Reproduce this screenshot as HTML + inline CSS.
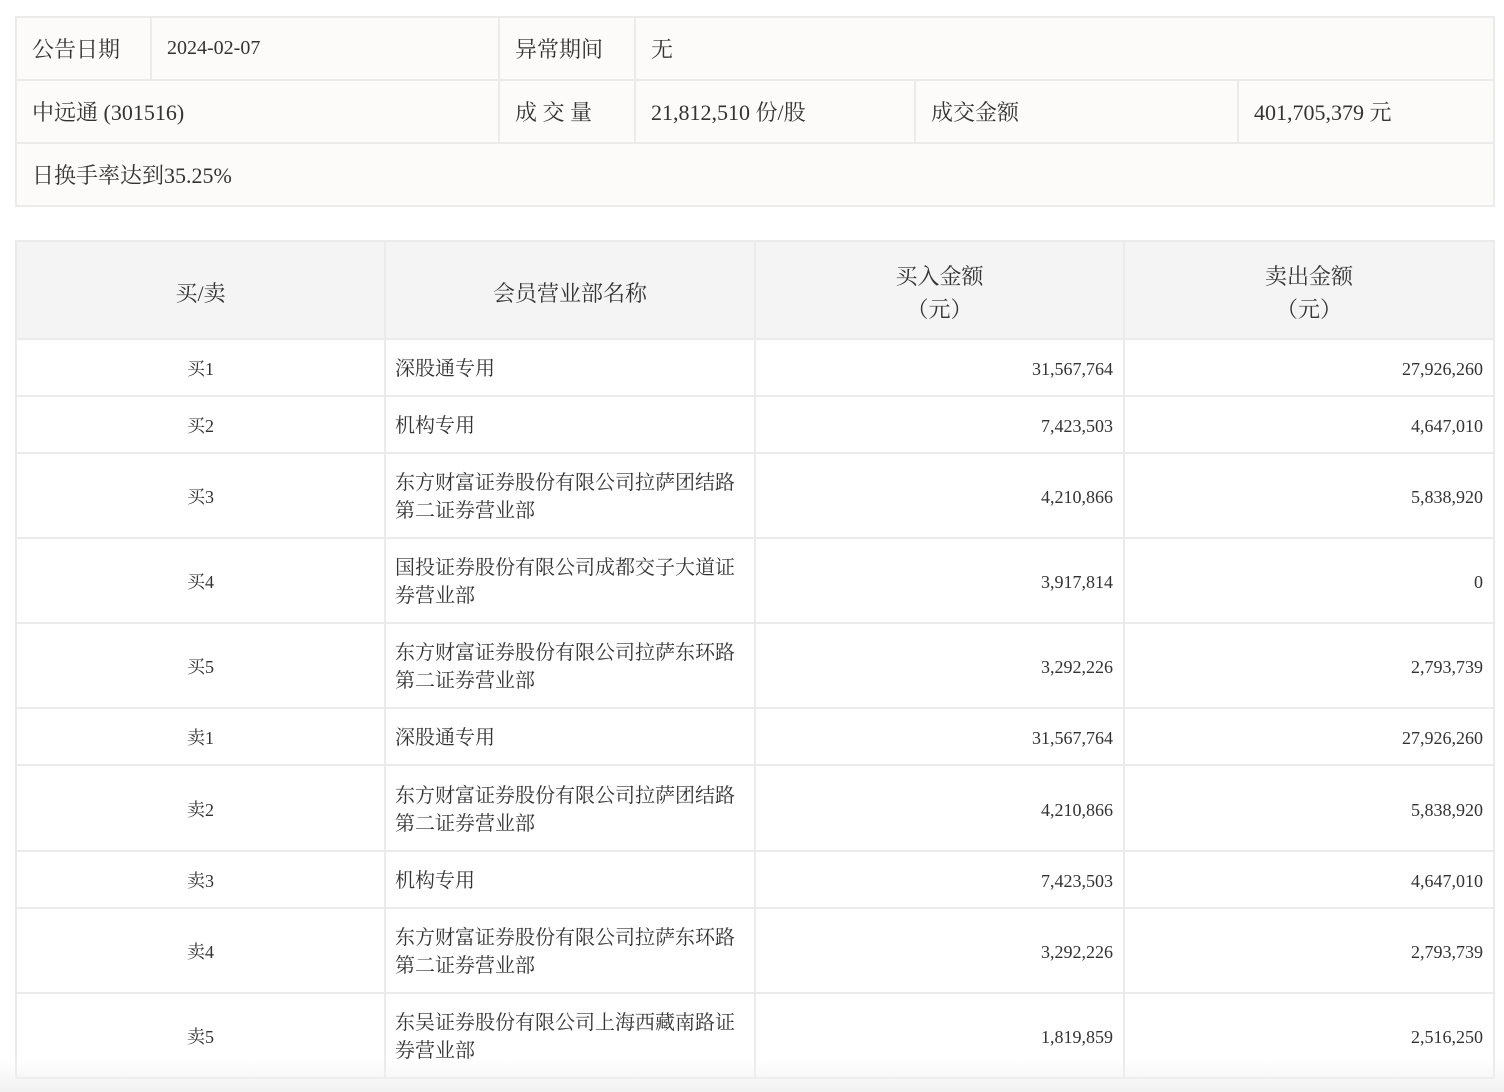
<!DOCTYPE html>
<html><head><meta charset="utf-8">
<style>
body{margin:0;background:#fff;width:1504px;height:1092px;overflow:hidden;font-family:"Liberation Serif","Noto Serif CJK SC",serif;color:#333;}
table{position:absolute;border-collapse:collapse;table-layout:fixed;}
td,th{border:2px solid #ebebeb;padding:0;}
#t1{left:15px;top:16px;width:1478px;background:#fcfbf9;font-size:22px;}
#t1 td{height:61px;padding-left:15px;}
#t2{left:15px;top:240px;width:1478px;font-size:18px;}
#t2 th{background:#f4f4f4;font-weight:normal;font-size:22px;height:90px;line-height:33px;padding-top:6px;}
#t2 td{line-height:28px;padding-top:3px;}
#t2 td.c{text-align:center}
#t2 td.n{padding-left:9px;font-size:20px}
#t2 td.r{text-align:right;padding-right:10px}
.fade{position:absolute;left:0;top:1060px;width:1504px;height:32px;background:linear-gradient(rgba(255,255,255,0),rgba(240,240,240,.9));}
</style></head><body>
<table id="t1">
<colgroup><col style="width:135px"><col style="width:348px"><col style="width:136px"><col style="width:280px"><col style="width:323px"><col style="width:256px"></colgroup>
<tr><td>公告日期</td><td style="font-size:20px">2024-02-07</td><td>异常期间</td><td colspan="3">无</td></tr>
<tr><td colspan="2">中远通 (301516)</td><td>成 交 量</td><td>21,812,510 份/股</td><td>成交金额</td><td>401,705,379 元</td></tr>
<tr><td colspan="6">日换手率达到35.25%</td></tr>
</table>
<table id="t2">
<colgroup><col style="width:369px"><col style="width:370px"><col style="width:369px"><col style="width:370px"></colgroup>
<tr><th>买/卖</th><th>会员营业部名称</th><th>买入金额<br>（元）</th><th>卖出金额<br>（元）</th></tr>
<tr style="height:57px"><td class="c">买1</td><td class="n">深股通专用</td><td class="r">31,567,764</td><td class="r">27,926,260</td></tr>
<tr style="height:57px"><td class="c">买2</td><td class="n">机构专用</td><td class="r">7,423,503</td><td class="r">4,647,010</td></tr>
<tr style="height:85px"><td class="c">买3</td><td class="n">东方财富证券股份有限公司拉萨团结路<br>第二证券营业部</td><td class="r">4,210,866</td><td class="r">5,838,920</td></tr>
<tr style="height:85px"><td class="c">买4</td><td class="n">国投证券股份有限公司成都交子大道证<br>券营业部</td><td class="r">3,917,814</td><td class="r">0</td></tr>
<tr style="height:85px"><td class="c">买5</td><td class="n">东方财富证券股份有限公司拉萨东环路<br>第二证券营业部</td><td class="r">3,292,226</td><td class="r">2,793,739</td></tr>
<tr style="height:57px"><td class="c">卖1</td><td class="n">深股通专用</td><td class="r">31,567,764</td><td class="r">27,926,260</td></tr>
<tr style="height:86px"><td class="c">卖2</td><td class="n">东方财富证券股份有限公司拉萨团结路<br>第二证券营业部</td><td class="r">4,210,866</td><td class="r">5,838,920</td></tr>
<tr style="height:57px"><td class="c">卖3</td><td class="n">机构专用</td><td class="r">7,423,503</td><td class="r">4,647,010</td></tr>
<tr style="height:85px"><td class="c">卖4</td><td class="n">东方财富证券股份有限公司拉萨东环路<br>第二证券营业部</td><td class="r">3,292,226</td><td class="r">2,793,739</td></tr>
<tr style="height:85px"><td class="c">卖5</td><td class="n">东吴证券股份有限公司上海西藏南路证<br>券营业部</td><td class="r">1,819,859</td><td class="r">2,516,250</td></tr>
</table>
<div class="fade"></div>
</body></html>
